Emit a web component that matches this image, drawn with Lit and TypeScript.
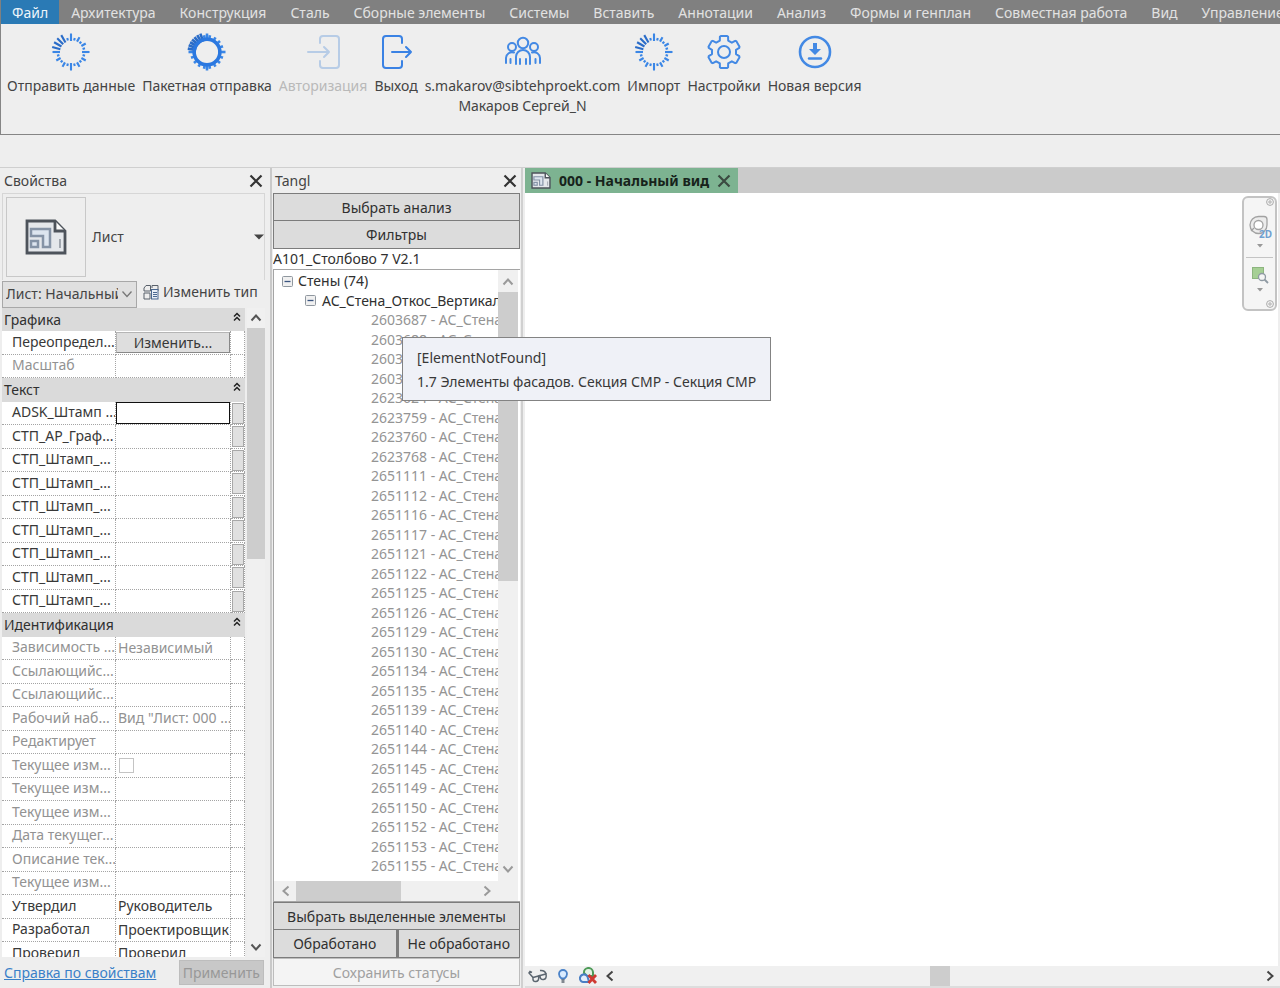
import { LitElement, html, svg, css, nothing } from "lit";
import { customElement } from "lit/decorators.js";
import { classMap } from "lit/directives/class-map.js";

type Row = {
  name: string;
  value?: string;
  kind?: "text" | "button" | "check";
  muted?: boolean;
  more?: boolean;
  active?: boolean;
};
type Group = { title: string; rows: Row[] };

const MENU = [
  "Файл", "Архитектура", "Конструкция", "Сталь", "Сборные элементы", "Системы", "Вставить",
  "Аннотации", "Анализ", "Формы и генплан", "Совместная работа", "Вид", "Управление",
];

const stamp = (name: string): Row => ({ name, more: true });
const muted = (name: string, value = ""): Row => ({ name, value, muted: true });

const GROUPS: Group[] = [
  {
    title: "Графика",
    rows: [{ name: "Переопредел...", value: "Изменить...", kind: "button" }, muted("Масштаб")],
  },
  {
    title: "Текст",
    rows: [
      { name: "ADSK_Штамп ...", more: true, active: true },
      stamp("СТП_АР_Граф..."),
      ...Array.from({ length: 7 }, () => stamp("СТП_Штамп_...")),
    ],
  },
  {
    title: "Идентификация",
    rows: [
      muted("Зависимость ...", "Независимый"),
      muted("Ссылающийс..."),
      muted("Ссылающийс..."),
      muted("Рабочий наб...", 'Вид "Лист: 000 ...'),
      muted("Редактирует"),
      { name: "Текущее изм...", kind: "check", muted: true },
      muted("Текущее изм..."),
      muted("Текущее изм..."),
      muted("Дата текущег..."),
      muted("Описание тек..."),
      muted("Текущее изм..."),
      { name: "Утвердил", value: "Руководитель" },
      { name: "Разработал", value: "Проектировщик" },
      { name: "Проверил", value: "Проверил" },
    ],
  },
];

const ELEMENT_IDS = [
  2603687, 2603688, 2603689, 2603690, 2623624, 2623759, 2623760, 2623768, 2651111, 2651112,
  2651116, 2651117, 2651121, 2651122, 2651125, 2651126, 2651129, 2651130, 2651134, 2651135,
  2651139, 2651140, 2651144, 2651145, 2651149, 2651150, 2651152, 2651153, 2651155,
];

/** Ring of rays: the four compass rays and the north-west quadrant are longer. */
const burst = (dense: boolean) => {
  const count = dense ? 36 : 24;
  const rays = Array.from({ length: count }, (_, i) => {
    const deg = (360 / count) * i;
    const a = (deg * Math.PI) / 180;
    const cardinal = deg % 90 === 0;
    const nw = deg > 180 && deg < 255;
    const outer = cardinal ? 18.5 : nw ? 19.5 : i % 2 ? 14.5 : 17;
    const inner = cardinal || nw ? 11 : 12;
    return svg`<line
      x1=${20 + inner * Math.cos(a)} y1=${20 + inner * Math.sin(a)}
      x2=${20 + outer * Math.cos(a)} y2=${20 + outer * Math.sin(a)}
      stroke=${nw ? "#2a6cc8" : "#3a86e6"} stroke-width=${dense ? 2.6 : 2.1} />`;
  });
  return html`<svg width="40" height="40" viewBox="0 0 40 40" fill="none" aria-hidden="true">
    ${rays}
    ${dense ? svg`<circle cx="20" cy="20" r="12.8" stroke="#2b78e0" stroke-width="3.4" />` : nothing}
  </svg>`;
};

const gearPath = (() => {
  const pts: string[] = [];
  for (let i = 0; i < 6; i++) {
    const mid = -90 + i * 60;
    for (const [off, r] of [[-20, 12.2], [-15, 15.8], [-11, 16.4], [11, 16.4], [15, 15.8], [20, 12.2]] as const) {
      const a = ((mid + off) * Math.PI) / 180;
      pts.push(`${(20 + r * Math.cos(a)).toFixed(2)} ${(20 + r * Math.sin(a)).toFixed(2)}`);
    }
  }
  return `M${pts.join("L")}Z`;
})();

const line = (body: unknown, color = "#4389e4") => html`<svg
  width="40" height="40" viewBox="0 0 40 40" fill="none" stroke=${color}
  stroke-width="2" stroke-linecap="round" stroke-linejoin="round" aria-hidden="true"
>${body}</svg>`;

const ICONS = {
  send: burst(false),
  batch: burst(true),
  login: line(svg`<path d="M17 11V7q0-3 3-3h13q3 0 3 3v26q0 3-3 3H20q-3 0-3-3v-4M5 20h21M21 15l5 5-5 5" />`, "#b7cce6"),
  logout: line(svg`<path d="M26 11V7q0-3-3-3H10q-3 0-3 3v26q0 3 3 3h13q3 0 3-3v-4M16 20h19M30 15l5 5-5 5" />`, "#3a82e4"),
  people: line(svg`<g stroke-width="2">
    <circle cx="20" cy="11" r="5.2" /><circle cx="9" cy="15" r="4" /><circle cx="31" cy="15" r="4" />
    <path d="M13 32V25a7 7 0 0 1 14 0V32M17 32V27M23 32V27" />
    <path d="M3 31V26a6 6 0 0 1 8-5.500M37 31V26a6 6 0 0 0-8-5.500M7.500 31V27M32.500 31V27" /></g>`),
  gear: line(svg`<path d=${gearPath} /><circle cx="20" cy="20" r="6" />`),
  download: line(svg`<circle cx="20" cy="20" r="15" stroke-width="2.600" />
    <path d="M18 11h4v6h4l-6 6-6-6h4z" fill="#4389e4" stroke="none" />
    <path d="M14 26.500h12" stroke-width="2.400" />`),
};

const RIBBON: { label: string; sub?: string; icon: unknown; disabled?: boolean }[] = [
  { label: "Отправить данные", icon: ICONS.send },
  { label: "Пакетная отправка", icon: ICONS.batch },
  { label: "Авторизация", icon: ICONS.login, disabled: true },
  { label: "Выход", icon: ICONS.logout },
  { label: "s.makarov@sibtehproekt.com", sub: "Макаров Сергей_N", icon: ICONS.people },
  { label: "Импорт", icon: ICONS.send },
  { label: "Настройки", icon: ICONS.gear },
  { label: "Новая версия", icon: ICONS.download },
];

const ROTATION = { up: 0, right: 90, down: 180, left: 270 };
const chevron = (dir: keyof typeof ROTATION, color = "#4d4d4d", weight = 2) => html`<svg
  width="12" height="12" viewBox="0 0 12 12" fill="none" aria-hidden="true"
><path d="M1.500 8.500 6 3.500 10.500 8.500" stroke=${color} stroke-width=${weight}
  transform="rotate(${ROTATION[dir]} 6 6)" /></svg>`;

const cross = (color = "#333") => html`<svg width="14" height="14" viewBox="0 0 14 14" aria-hidden="true">
  <path d="M1.500 1.500 12.500 12.500M12.500 1.500 1.500 12.500" stroke=${color} stroke-width="2.200" fill="none" />
</svg>`;

const sheet = (width: number, height: number, weight: number) => html`<svg
  width=${width} height=${height} viewBox="0 0 42 36" fill="none" aria-hidden="true"
>
  <path d="M2 2h28l10 10v22H2z" fill="#e4e7eb" stroke="#4d535b" stroke-width=${weight} />
  <path d="M30 2v10h10" fill="#fafafa" stroke="#4d535b" stroke-width=${weight} />
  <path d="M6 10h19v18h-7V17H6z" fill="#dde5ef" stroke="#8593a6" stroke-width="2.500" />
  <rect x="6" y="22" width="7" height="6" fill="#dde5ef" stroke="#8593a6" stroke-width="2.500" />
  <path d="M35 20v9" stroke="#a0a6ae" stroke-width="2" />
</svg>`;

@customElement("app-root")
export class AppRoot extends LitElement {
  static styles = css`
    :host {
      display: flex;
      flex-direction: column;
      height: 100vh;
      overflow: hidden;
      position: relative;
      background: #eeeeee;
      color: #444;
      font: 14px/20px "Noto Sans", "Open Sans", sans-serif;
    }
    *, *::before { box-sizing: border-box; }
    svg { display: block; flex: none; }
    button, input, select { font: inherit; color: inherit; margin: 0; padding: 0; border: 0; border-radius: 0; background: none; min-width: 0; }

    .menu { display: flex; flex: none; height: 24px; background: #808080; overflow: hidden; padding-left: 1px; }
    .menu-item { flex: none; padding: 1px 12px 0; line-height: 24px; color: #e2e2e2; white-space: nowrap; }
    .menu-item.current { background: #2a7ab5; color: #eef5fa; padding: 1px 11px 0; }

    .ribbon { display: flex; flex: none; align-items: flex-start; gap: 7px; height: 111px; padding: 8px 6px 0; border: solid #858585; border-width: 0 0 1px 1px; }
    .tool { display: flex; flex-direction: column; align-items: center; flex: none; white-space: nowrap; }
    .tool-label { margin-top: 4px; }
    .tool:disabled { color: #b9b9b9; }

    .work { display: grid; grid-template-columns: 272px 251px minmax(0, 1fr); flex: 1; min-height: 0; margin-top: 32px; border-top: 1px solid #cfcfcf; }
    .panel { display: flex; flex-direction: column; min-width: 0; min-height: 0; }
    .panel-title { display: flex; flex: none; align-items: center; justify-content: space-between; height: 25px; padding: 1px 7px 0 4px; }
    .panel-title h2 { margin: 0; font: inherit; }
    .icon-button { display: grid; place-items: center; flex: none; }

    .props { border-right: 2px solid #c9c9c9; }
    .type { display: flex; flex: none; align-items: center; gap: 6px; height: 87px; margin: 0 5px 0 2px; padding: 0 0 0 3px; border: 1px solid #d6d6d6; border-bottom: 0; text-align: left; }
    .thumb { display: grid; place-items: center; width: 80px; height: 80px; border: 1px solid #c8c8c8; }
    .type-name { flex: 1; }
    .instance { display: flex; flex: none; align-items: center; gap: 6px; height: 28px; padding-left: 2px; }
    .picker { display: grid; width: 135px; height: 27px; align-items: center; background: #e0e0e0; border: 1px solid #a8a8a8; }
    .picker > * { grid-area: 1 / 1; }
    .picker select { appearance: none; width: 100%; height: 25px; padding: 0 18px 0 3px; }
    .picker svg { justify-self: end; margin-right: 3px; pointer-events: none; }
    .edit-type { display: flex; align-items: center; align-self: flex-start; gap: 4px; line-height: 24px; white-space: nowrap; }

    .grid-area { display: flex; flex: 1; min-height: 0; padding-left: 2px; }
    .grid-clip { width: 243px; overflow: hidden; }
    table { width: 100%; table-layout: fixed; border-collapse: separate; border-spacing: 0; }
    tr { height: 23px; }
    tr.tall { height: 24px; }
    th, td { padding: 0; font-weight: 400; text-align: left; line-height: 20px; white-space: nowrap; overflow: hidden; }
    .group th { background: #dadada; padding: 0 4px 0 2px; color: #303030; }
    .group-head { display: flex; align-items: center; justify-content: space-between; }
    .group-head svg { margin-bottom: 6px; }
    .prop { background: #fff; color: #383838; }
    .prop th { padding: 0 0 2px 10px; border: dotted #a4a4a4; border-width: 0 1px 1px 0; }
    .prop td { border: dotted #a4a4a4; border-width: 0 1px 1px 0; }
    .prop.muted { color: #929292; }
    .prop input.value { display: block; width: 100%; height: 20px; padding: 0 0 1px 2px; }
    .prop input.value.active { height: 22px; border: 1px solid #111; }
    .prop input.tick { display: block; appearance: none; width: 15px; height: 15px; margin-left: 3px; border: 1px solid #c4c4c4; background: #fff; }
    .prop .edit { display: block; width: 100%; height: 21px; background: #dedede; border: 1px solid #b5b5b5; border-right-color: #888; border-bottom-color: #888; }
    .prop .more { display: block; width: 12px; height: 21px; margin-left: 1px; background: #e0e0e0; border: 1px solid #a8a8a8; }
    .col-name { width: 114px; }
    .col-more { width: 14px; }

    .vscroll { display: flex; flex-direction: column; align-items: center; background: #f0f0f0; }
    .vscroll button, .hscroll button { display: grid; place-items: center; flex: none; width: 20px; height: 20px; }
    .track { flex: 1; width: 100%; min-height: 0; }
    .bar { background: #cdcdcd; }
    .grid-area .vscroll { width: 18px; margin-left: 2px; }
    .grid-area .bar { height: 38%; }
    .props-foot { display: flex; flex: none; align-items: center; justify-content: space-between; height: 31px; padding: 0 6px 0 4px; }
    a { color: #3a80c8; }
    .apply { height: 25px; padding: 0 3px; background: #c8c8c8; border: 1px solid #bdbdbd; color: #989898; }

    .tangl { padding: 0 1px; border-right: 2px solid #d0d0d0; }
    .tangl .panel-title { padding: 1px 3px 0 2px; }
    .wide { flex: none; height: 28px; padding-top: 1px; background: #dcdcdc; border: 1px solid #7c7c7c; color: #303030; white-space: nowrap; }
    .wide.joined { border-top: 0; }
    .model { flex: none; height: 20px; width: 100%; background: #fff; color: #303030; }
    .tree-box { display: flex; flex-direction: column; flex: 1; min-height: 0; border: 1px solid #a5a5a5; border-right: 0; background: #fff; padding-right: 2px; }
    .tree-main { display: flex; flex: 1; min-height: 0; }
    .tree { flex: 1; min-width: 0; margin: 0; padding: 1px 0 0; list-style: none; overflow: hidden; white-space: nowrap; }
    .tree li { display: flex; align-items: center; height: 19px; color: #303030; }
    .tree li:nth-child(odd) { height: 20px; }
    .tree .root { padding-left: 8px; gap: 5px; }
    .tree .family { padding-left: 31px; gap: 6px; }
    .tree .leaf { padding-left: 97px; color: #949494; }
    .tree-main .vscroll { width: 20px; padding: 2px 0; }
    .tree-main .bar { height: 51%; }
    .hscroll { display: flex; flex: none; height: 20px; background: #f0f0f0; }
    .hscroll .bar { height: 20px; }
    .tree-box .hscroll { padding: 0 21px 0 2px; }
    .tree-box .bar.h { width: 58%; }
    .pair { display: grid; grid-template-columns: 1fr 1fr; flex: none; }
    .pair .wide + .wide { border-left-width: 2px; }
    .save { background: #f4f4f4; border-color: #bdbdbd; color: #a0a0a0; margin-bottom: 2px; }

    .view { padding-left: 2px; }
    .tabs { display: flex; flex: none; height: 25px; background: #cbcbcb; }
    .tab { display: flex; align-items: center; gap: 8px; padding: 0 7px 0 6px; background: #7db391; color: #17231b; font-weight: 700; white-space: nowrap; }
    .canvas { display: flex; flex: 1; min-height: 0; justify-content: flex-end; background: #fff; border-right: 2px solid #eee; padding: 3px 1px 0; }
    .nav { display: flex; flex-direction: column; align-items: center; justify-content: space-between; width: 35px; height: 115px; padding: 0 0 1px; background: #f5f5f5; border: 2px solid #c3c3c3; border-radius: 6px; }
    .nav > svg.dot { align-self: flex-end; margin-right: 1px; }
    .nav-tool { display: grid; justify-items: center; gap: 4px; }
    .status { display: flex; flex: none; align-items: center; height: 22px; border-bottom: 2px solid #ddd; background: #f0f0f0; }
    .status .icon-button { width: 25px; }
    .status .hscroll { flex: 1; }
    .status .track { display: flex; justify-content: center; }
    .status .bar { width: 20px; }

    .tooltip { position: absolute; left: 402px; top: 337px; padding: 8px 14px 6px; background: #eff1f7; border: 1px solid #838383; line-height: 24px; color: #383838; white-space: nowrap; }
    .tooltip p { margin: 0; }
  `;

  private renderRow(row: Row, tall: boolean) {
    const value =
      row.kind === "button"
        ? html`<button class="edit">${row.value}</button>`
        : row.kind === "check"
          ? html`<input class="tick" type="checkbox" disabled aria-label=${row.name} />`
          : html`<input
              class=${classMap({ value: true, active: !!row.active })}
              type="text" .value=${row.value ?? ""} ?readonly=${!!row.muted} aria-label=${row.name}
            />`;
    return html`<tr class=${classMap({ prop: true, muted: !!row.muted, tall })}>
      <th scope="row">${row.name}</th>
      <td>${value}</td>
      <td>${row.more ? html`<button class="more" aria-label="Обзор"></button>` : nothing}</td>
    </tr>`;
  }

  private renderTable() {
    let index = 0;
    const isTall = () => index++ % 2 === 1;
    return html`<table>
      <colgroup><col class="col-name" /><col /><col class="col-more" /></colgroup>
      ${GROUPS.map((group) => html`<tbody>
        <tr class=${classMap({ group: true, tall: isTall() })}>
          <th colspan="3" scope="colgroup"><div class="group-head">${group.title}
            <svg width="8" height="10" viewBox="0 0 8 10" fill="none" aria-hidden="true">
              <path d="M1 4.500 4 1.500 7 4.500M1 8.500 4 5.500 7 8.500" stroke="#222" stroke-width="1.500" />
            </svg></div></th>
        </tr>
        ${group.rows.map((row) => this.renderRow(row, isTall()))}
      </tbody>`)}
    </table>`;
  }

  private renderScroll(color: string) {
    return html`<div class="vscroll">
      <button aria-label="Вверх">${chevron("up", color)}</button>
      <div class="track"><div class="bar"></div></div>
      <button aria-label="Вниз">${chevron("down", color)}</button>
    </div>`;
  }

  private renderProperties() {
    return html`<section class="panel props">
      <div class="panel-title"><h2>Свойства</h2>
        <button class="icon-button" aria-label="Закрыть свойства">${cross()}</button></div>
      <button class="type">
        <span class="thumb">${sheet(42, 36, 2.8)}</span>
        <span class="type-name">Лист</span>
        <svg width="10" height="6" viewBox="0 0 10 6" aria-hidden="true"><path d="M0 .5h10L5 5.500z" fill="#444" /></svg>
      </button>
      <div class="instance">
        <label class="picker">
          <select aria-label="Экземпляр"><option>Лист: Начальный вид</option></select>
          ${chevron("down", "#777", 1.3)}
        </label>
        <button class="edit-type">
          <svg width="16" height="16" viewBox="0 0 16 16" fill="none" stroke="#59616b" aria-hidden="true">
            <path d="M1 4 3 1.500H7.500V7H1zM9 4V1.500H15V7M1 9H7v6H1z" />
            <rect x="8.500" y="5.500" width="6.500" height="9.500" fill="#e8eef7" stroke="#4a6790" />
            <path d="M10 8.500h4M10 10.500h4M10 12.500h4" stroke="#4a6790" />
          </svg>Изменить тип</button>
      </div>
      <div class="grid-area">
        <div class="grid-clip">${this.renderTable()}</div>
        ${this.renderScroll("#555")}
      </div>
      <div class="props-foot">
        <a href="#help">Справка по свойствам</a>
        <button class="apply" disabled>Применить</button>
      </div>
    </section>`;
  }

  private renderTangl() {
    const toggle = html`<button class="icon-button" aria-label="Свернуть">
      <svg width="11" height="11" viewBox="0 0 11 11" aria-hidden="true">
        <rect x=".5" y=".5" width="10" height="10" rx="1" fill="#f0f0f0" stroke="#8f979f" />
        <path d="M2.500 5.500h6" stroke="#3a5580" stroke-width="1.300" />
      </svg></button>`;
    return html`<section class="panel tangl">
      <div class="panel-title"><h2>Tangl</h2>
        <button class="icon-button" aria-label="Закрыть Tangl">${cross()}</button></div>
      <button class="wide">Выбрать анализ</button>
      <button class="wide joined">Фильтры</button>
      <input class="model" type="text" aria-label="Модель" .value=${"A101_Столбово 7 V2.1"} />
      <div class="tree-box">
        <div class="tree-main">
          <ul class="tree">
            <li class="root">${toggle}Стены (74)</li>
            <li class="family">${toggle}АС_Стена_Откос_Вертикальный</li>
            ${ELEMENT_IDS.map((id) => html`<li class="leaf">${id} - АС_Стена_Откос</li>`)}
          </ul>
          ${this.renderScroll("#9a9a9a")}
        </div>
        <div class="hscroll">
          <button aria-label="Влево">${chevron("left", "#9a9a9a")}</button>
          <div class="track"><div class="bar h"></div></div>
          <button aria-label="Вправо">${chevron("right", "#9a9a9a")}</button>
        </div>
      </div>
      <button class="wide">Выбрать выделенные элементы</button>
      <div class="pair">
        <button class="wide joined">Обработано</button>
        <button class="wide joined">Не обработано</button>
      </div>
      <button class="wide save" disabled>Сохранить статусы</button>
    </section>`;
  }

  private renderView() {
    const dot = html`<svg class="dot" width="8" height="8" viewBox="0 0 8 8" fill="none" stroke="#aaa" aria-hidden="true">
      <circle cx="4" cy="4" r="3.400" /><circle cx="4" cy="4" r="1.200" /></svg>`;
    const caret = html`<svg width="6" height="4" viewBox="0 0 6 4" aria-hidden="true"><path d="M0 0h6L3 3.500z" fill="#999" /></svg>`;
    return html`<main class="panel view">
      <div class="tabs"><div class="tab">
        ${sheet(20, 17, 3)}<span>000 - Начальный вид</span>
        <button class="icon-button" aria-label="Закрыть вид">${cross("#3b4a41")}</button>
      </div></div>
      <div class="canvas"><div class="nav">
        ${dot}
        <button class="nav-tool" aria-label="Штурвал 2D">
          <svg width="26" height="26" viewBox="0 0 26 26" fill="none" stroke="#a2a2a2" stroke-width="1.300" aria-hidden="true">
            <path d="M3 11a8.500 8.500 0 0 1 8.500-8.500H17a3 3 0 0 1 3 3V11a8.500 8.500 0 0 1-17 0z" fill="#ececec" />
            <circle cx="11.500" cy="11" r="4.500" fill="#fff" /><path d="M4 17l3-3" />
            <text x="12" y="24" font-size="10" font-weight="700" fill="#6fa0d0" stroke="none">2D</text>
          </svg>${caret}</button>
        <svg width="27" height="1" viewBox="0 0 27 1" aria-hidden="true"><path d="M0 .5h27" stroke="#c4c4c4" /></svg>
        <button class="nav-tool" aria-label="Показать область">
          <svg width="18" height="18" viewBox="0 0 18 18" fill="none" aria-hidden="true">
            <rect x="1.500" y="1.500" width="11" height="11" fill="#a5cf94" stroke="#8db57f" />
            <circle cx="11" cy="11" r="3.500" fill="#f5f5f5" stroke="#8f9aa3" stroke-width="1.300" />
            <path d="m13.500 13.500 3.500 3.500" stroke="#8f9aa3" stroke-width="1.800" />
          </svg>${caret}</button>
        ${dot}
      </div></div>
      <div class="status">
        <button class="icon-button" aria-label="Временно скрыть">
          <svg width="20" height="16" viewBox="0 0 20 16" fill="none" stroke="#5c6670" stroke-width="1.500" aria-hidden="true">
            <path d="M5 9.500 10.500 8q1 5-2.500 5.500T5 9.500zM12 7.500l6-1.500q1 5-2.500 5.500T12 7.500z" />
            <path d="M10.500 8 12 7.500M5 9.500 1 5l1-1.500 2 1M18 6q-1-4-6-3.500" />
          </svg></button>
        <button class="icon-button" aria-label="Показать скрытые">
          <svg width="10" height="14" viewBox="0 0 10 14" fill="none" aria-hidden="true">
            <path d="M3.500 9.500Q1 7.500 1 5a4 4 0 0 1 8 0q0 2.500-2.500 4.500z" fill="#d9ebff" stroke="#4a82c8" stroke-width="1.800" />
            <path d="M3.500 11h3M3.500 13h3" stroke="#5c6670" stroke-width="1.300" />
          </svg></button>
        <button class="icon-button" aria-label="Ограничения">
          <svg width="20" height="18" viewBox="0 0 20 18" fill="none" stroke-width="2" aria-hidden="true">
            <path d="M6 6a4.500 4.500 0 0 1 9-1v4H9z" fill="#e3f2e4" stroke="#4d9a57" />
            <path d="M2 11a4 4 0 0 1 7.500-1.500L11 15H5a3.500 3.500 0 0 1-3-4z" fill="#e4eefb" stroke="#4a7fc4" />
            <path d="m10.500 8 7.500 8M18 8l-7.500 8" stroke="#cf3a32" stroke-width="2.800" />
          </svg></button>
        <div class="hscroll">
          <button aria-label="Влево">${chevron("left", "#444")}</button>
          <div class="track"><div class="bar"></div></div>
          <button aria-label="Вправо">${chevron("right", "#444")}</button>
        </div>
      </div>
    </main>`;
  }

  render() {
    return html`
      <nav class="menu" aria-label="Лента">
        ${MENU.map((item, i) => html`<button class=${classMap({ "menu-item": true, current: i === 0 })}>${item}</button>`)}
      </nav>
      <div class="ribbon">
        ${RIBBON.map((tool) => html`<button class="tool" ?disabled=${!!tool.disabled}>
          ${tool.icon}<span class="tool-label">${tool.label}</span>
          ${tool.sub ? html`<span>${tool.sub}</span>` : nothing}
        </button>`)}
      </div>
      <div class="work">
        ${this.renderProperties()}${this.renderTangl()}${this.renderView()}
      </div>
      <div class="tooltip" role="tooltip">
        <p>[ElementNotFound]</p>
        <p>1.7 Элементы фасадов. Секция СМР - Секция СМР</p>
      </div>
    `;
  }
}
